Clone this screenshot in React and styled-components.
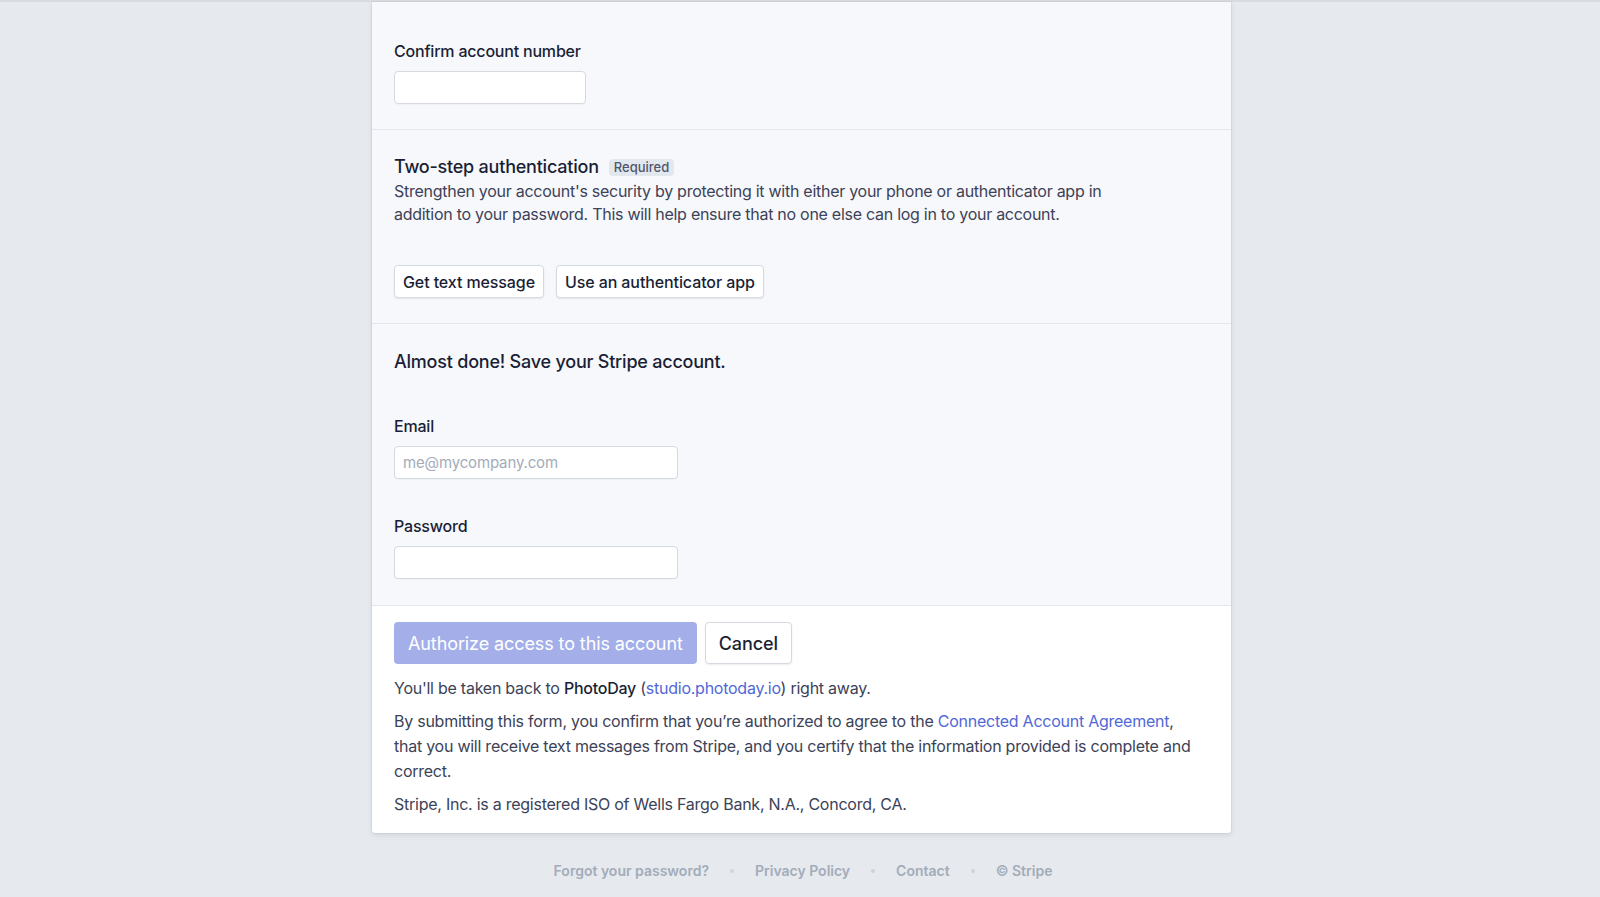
import React from 'react';
import styled, { createGlobalStyle } from 'styled-components';

const GlobalStyle = createGlobalStyle`
  html, body {
    margin: 0;
    padding: 0;
    background-color: #e6e9ee;
    font-family: Inter, "Noto Sans", "Liberation Sans", sans-serif;
    -webkit-font-smoothing: antialiased;
  }
`;

const Page = styled.div`
  display: flex;
  flex-direction: column;
  align-items: center;
  min-height: 897px;
  border-top: 2px solid #d8dbe0;
  padding-left: 3px;
  box-sizing: border-box;
`;

const Card = styled.div`
  width: 859px;
  background-color: #ffffff;
  border-radius: 0 0 4px 4px;
  box-shadow: 0 0 0 1px rgba(60, 66, 87, 0.05), 0 2px 5px rgba(60, 66, 87, 0.12);
  overflow: hidden;
`;

const Section = styled.div`
  display: flex;
  flex-direction: column;
  align-items: flex-start;
  padding: ${(props) => props.pad || '24px 22px 25px'};
  background-color: ${(props) => (props.white ? '#ffffff' : '#f7f8fb')};
  border-bottom: ${(props) => (props.last ? 'none' : '1px solid #e3e8ee')};
`;

const Label = styled.label`
  display: block;
  font-size: 16px;
  line-height: 24px;
  font-weight: 500;
  letter-spacing: -0.2px;
  color: #1a1f36;
  margin-top: ${(props) => props.top || '0px'};
`;

const Input = styled.input`
  box-sizing: border-box;
  width: ${(props) => props.w || '284px'};
  height: 33px;
  margin-top: 8px;
  padding: 0 8px;
  border: 1px solid #d5d9e0;
  border-radius: 4px;
  background-color: #ffffff;
  box-shadow: 0 1px 1px rgba(0, 0, 0, 0.03);
  font-family: inherit;
  font-size: 15px;
  letter-spacing: -0.15px;
  color: #1a1f36;
  outline: none;

  &::placeholder {
    color: #a3acb9;
  }
`;

const HeadingRow = styled.div`
  display: flex;
  align-items: center;
  gap: 10px;
`;

const Heading = styled.h2`
  margin: 0;
  font-size: 18px;
  line-height: 26px;
  font-weight: 500;
  letter-spacing: -0.22px;
  color: #1a1f36;
`;

const Badge = styled.span`
  display: inline-flex;
  align-items: center;
  height: 17px;
  padding: 0 5px;
  border-radius: 4px;
  background-color: #e3e8ee;
  color: #4f566b;
  font-size: 13px;
  font-weight: 500;
`;

const Description = styled.p`
  margin: 0;
  max-width: 720px;
  font-size: 16px;
  line-height: 23px;
  letter-spacing: -0.27px;
  color: #3c4257;
`;

const ButtonRow = styled.div`
  display: flex;
  gap: ${(props) => props.gap || '12px'};
  margin-top: ${(props) => props.top || '0px'};
`;

const Button = styled.button`
  box-sizing: border-box;
  height: ${(props) => (props.large ? '42px' : '33px')};
  padding: 0 ${(props) => (props.large ? '13px' : '8px')};
  border-radius: 4px;
  border: 1px solid #d5d9e0;
  background-color: #ffffff;
  box-shadow: 0 1px 2px rgba(0, 0, 0, 0.08);
  font-family: inherit;
  font-size: ${(props) => (props.large ? '18px' : '16px')};
  font-weight: 500;
  letter-spacing: -0.1px;
  color: #1a1f36;
  cursor: pointer;
`;

const PrimaryButton = styled(Button)`
  border-color: transparent;
  background-color: #a4afe9;
  color: #ffffff;
  box-shadow: none;
  font-weight: 400;
`;

const Paragraph = styled.p`
  max-width: 800px;
  margin: ${(props) => props.top || '8px'} 0 0;
  font-size: 16px;
  line-height: 25px;
  letter-spacing: -0.25px;
  color: #3c4257;
`;

const Strong = styled.span`
  color: #1a1f36;
  font-weight: 500;
`;

const TextLink = styled.a`
  color: #5068d8;
  text-decoration: none;
`;

const Footer = styled.nav`
  display: flex;
  align-items: center;
  margin-top: 28px;
  padding-left: 3px;
`;

const FooterLink = styled.a`
  font-size: 14px;
  line-height: 20px;
  font-weight: 600;
  color: #a3acb9;
  text-decoration: none;
`;

const Dot = styled.span`
  width: 4px;
  height: 4px;
  margin: 0 21px;
  border-radius: 50%;
  background-color: #cfd4dc;
`;

export default function App() {
  return (
    <>
      <GlobalStyle />
      <Page>
        <Card>
          <Section pad="37px 22px 25px">
            <Label>Confirm account number</Label>
            <Input w="192px" />
          </Section>

          <Section>
            <HeadingRow>
              <Heading>Two-step authentication</Heading>
              <Badge>Required</Badge>
            </HeadingRow>
            <Description>
              Strengthen your account's security by protecting it with either your phone or
              authenticator app in addition to your password. This will help ensure that no one
              else can log in to your account.
            </Description>
            <ButtonRow top="39px">
              <Button>Get text message</Button>
              <Button>Use an authenticator app</Button>
            </ButtonRow>
          </Section>

          <Section pad="25px 22px 26px">
            <Heading>Almost done! Save your Stripe account.</Heading>
            <Label top="39px">Email</Label>
            <Input placeholder="me@mycompany.com" />
            <Label top="35px">Password</Label>
            <Input type="password" />
          </Section>

          <Section white last pad="16px 22px 16px">
            <ButtonRow gap="8px">
              <PrimaryButton large>Authorize access to this account</PrimaryButton>
              <Button large>Cancel</Button>
            </ButtonRow>
            <Paragraph top="12px">
              You'll be taken back to <Strong>PhotoDay</Strong> (
              <TextLink href="#">studio.photoday.io</TextLink>) right away.
            </Paragraph>
            <Paragraph>
              By submitting this form, you confirm that you’re authorized to agree to the{' '}
              <TextLink href="#">Connected Account Agreement</TextLink>, that you will receive
              text messages from Stripe, and you certify that the information provided is
              complete and correct.
            </Paragraph>
            <Paragraph>Stripe, Inc. is a registered ISO of Wells Fargo Bank, N.A., Concord, CA.</Paragraph>
          </Section>
        </Card>

        <Footer>
          <FooterLink href="#">Forgot your password?</FooterLink>
          <Dot />
          <FooterLink href="#">Privacy Policy</FooterLink>
          <Dot />
          <FooterLink href="#">Contact</FooterLink>
          <Dot />
          <FooterLink href="#">© Stripe</FooterLink>
        </Footer>
      </Page>
    </>
  );
}
